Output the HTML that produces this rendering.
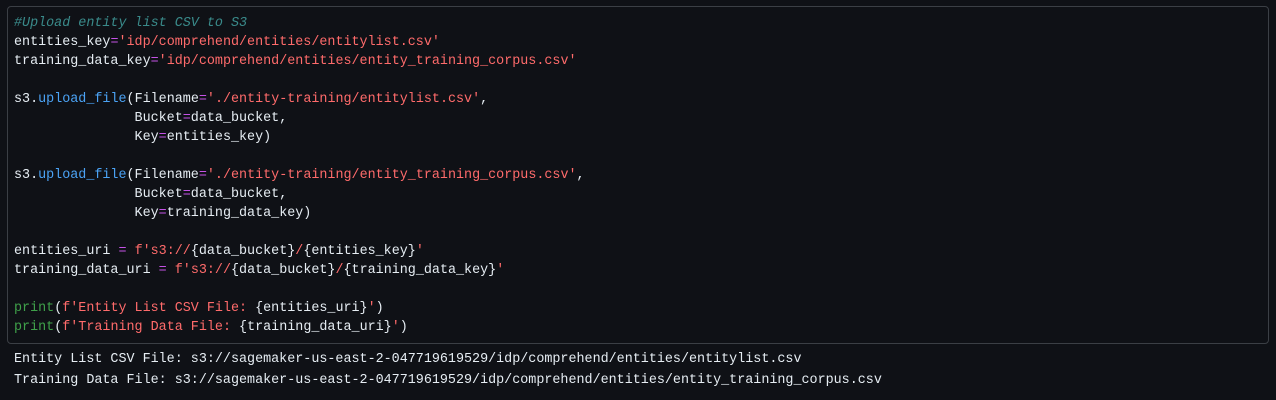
<!DOCTYPE html>
<html><head><style>
html,body{margin:0;padding:0;background:#0f1116;width:1276px;height:400px;overflow:hidden}
.box{position:absolute;left:7px;top:6px;width:1262px;height:338px;border:1px solid #3b3f45;border-radius:4px;background:#0f1116;box-sizing:border-box}
pre{margin:0;font-family:"Liberation Mono",monospace;font-size:13.4px;line-height:19px;color:#e6edf3;white-space:pre}
.code{position:absolute;left:14px;top:14px}
.out{position:absolute;left:14px;top:349px;line-height:21px}
.c{color:#3a8b8b;font-style:italic}
.s{color:#ff6b6b}
.o{color:#c552e6}
.f{color:#4ba3f5}
.b{color:#3fa14a}
</style></head><body>
<div class="box"></div>
<pre class="code"><span class="c">#Upload entity list CSV to S3</span>
entities_key<span class="o">=</span><span class="s">'idp/comprehend/entities/entitylist.csv'</span>
training_data_key<span class="o">=</span><span class="s">'idp/comprehend/entities/entity_training_corpus.csv'</span>

s3<span>.</span><span class="f">upload_file</span>(Filename<span class="o">=</span><span class="s">'./entity-training/entitylist.csv'</span>,
               Bucket<span class="o">=</span>data_bucket,
               Key<span class="o">=</span>entities_key)

s3.<span class="f">upload_file</span>(Filename<span class="o">=</span><span class="s">'./entity-training/entity_training_corpus.csv'</span>,
               Bucket<span class="o">=</span>data_bucket,
               Key<span class="o">=</span>training_data_key)

entities_uri <span class="o">=</span> <span class="s">f's3://</span>{data_bucket}<span class="s">/</span>{entities_key}<span class="s">'</span>
training_data_uri <span class="o">=</span> <span class="s">f's3://</span>{data_bucket}<span class="s">/</span>{training_data_key}<span class="s">'</span>

<span class="b">print</span>(<span class="s">f'Entity List CSV File: </span>{entities_uri}<span class="s">'</span>)
<span class="b">print</span>(<span class="s">f'Training Data File: </span>{training_data_uri}<span class="s">'</span>)</pre>
<pre class="out">Entity List CSV File: s3://sagemaker-us-east-2-047719619529/idp/comprehend/entities/entitylist.csv
Training Data File: s3://sagemaker-us-east-2-047719619529/idp/comprehend/entities/entity_training_corpus.csv</pre>
</body></html>
